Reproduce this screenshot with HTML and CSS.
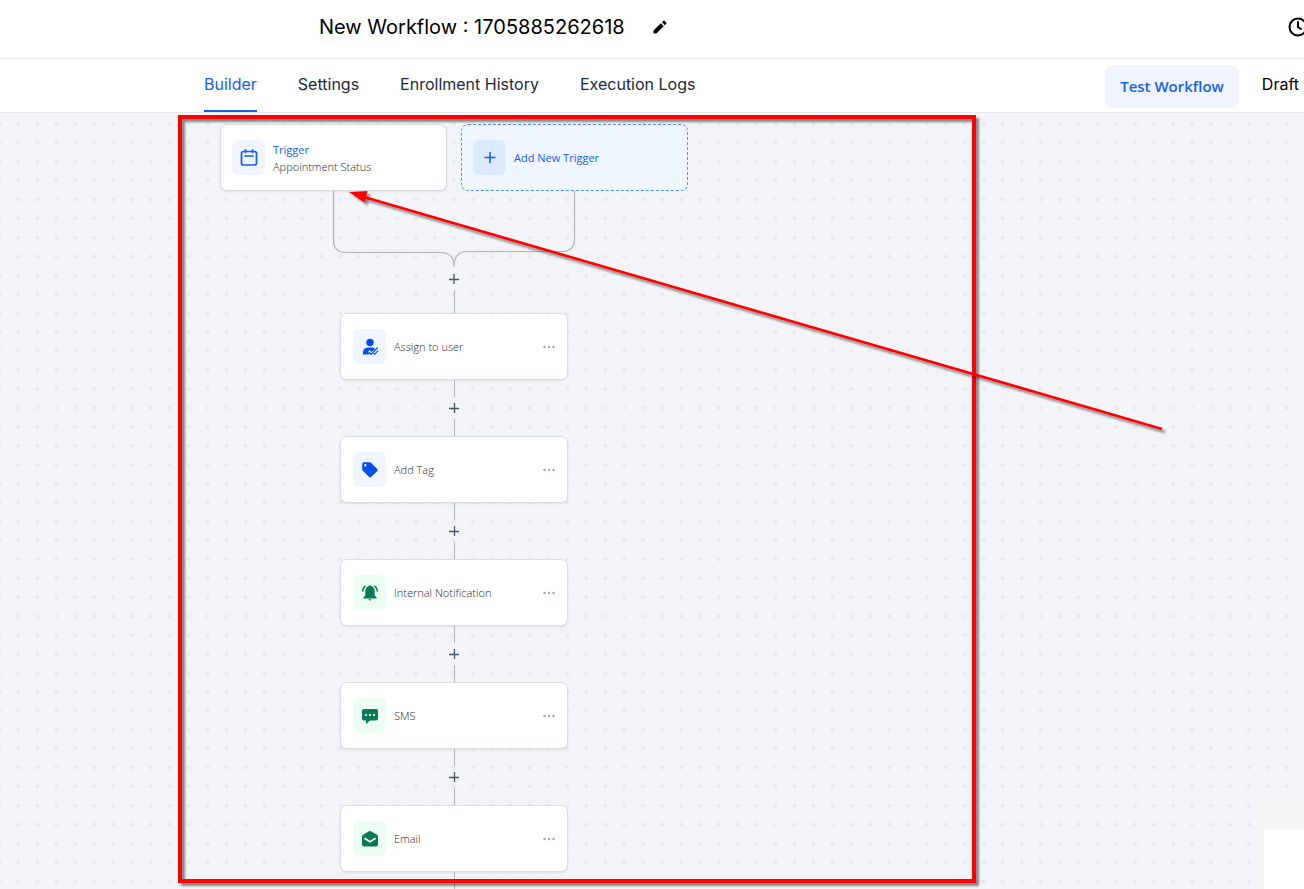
FILE: index.html
```html
<!DOCTYPE html>
<html lang="en">
<head>
<meta charset="utf-8">
<meta name="viewport" content="width=device-width, initial-scale=1">
<title>New Workflow : 1705885262618</title>
<link rel="stylesheet" href="styles.css">
</head>
<body>
<div class="app">
  <header class="titlebar">
    <h1 class="title">New Workflow : 1705885262618</h1>
    <button class="icon-button edit" type="button" aria-label="Rename workflow">
      <svg width="16" height="16" viewBox="0 0 16 16"><path d="M1.5 11.6V14.5H4.4L11.7 7.2 8.8 4.3ZM9.8 3.3 12.7 6.2 14.2 4.7Q14.8 4.1 14.2 3.5L12.5 1.8Q11.9 1.2 11.3 1.8Z"/></svg>
    </button>
    <button class="icon-button clock" type="button" aria-label="Version history">
      <svg width="24" height="24" viewBox="0 0 24 24" fill="none" stroke="#000" stroke-width="2" stroke-linecap="round" stroke-linejoin="round"><circle cx="12" cy="12" r="8.5"/><path d="M12 7V12L15 14"/></svg>
    </button>
  </header>

  <div class="toolbar">
    <nav class="tabs">
      <a class="tab active" href="#builder" aria-current="page">Builder</a>
      <a class="tab" href="#settings">Settings</a>
      <a class="tab" href="#history">Enrollment History</a>
      <a class="tab" href="#logs">Execution Logs</a>
    </nav>
    <div class="actions">
      <button class="test" type="button">Test Workflow</button>
      <span class="status">Draft</span>
    </div>
  </div>

  <main class="canvas">
    <svg class="dots" width="100%" height="100%" aria-hidden="true">
      <defs>
        <pattern id="grid" x="8.9" y="1.5" width="18.93" height="18.93" patternUnits="userSpaceOnUse"><circle cx="9.5" cy="9.5" r="2" fill="#e7e8ea"/></pattern>
      </defs>
      <rect width="100%" height="100%" fill="url(#grid)"/>
    </svg>

    <div class="flow">
      <div class="triggers">
        <button class="card trigger" type="button">
          <span class="badge blue"><svg width="20" height="20" viewBox="0 0 20 20" fill="none" stroke="#155eef" stroke-width="1.7" stroke-linecap="round"><rect x="2.5" y="3.5" width="15" height="13.5" rx="2"/><path d="M6.5 1.8V4.5M13.5 1.8V4.5M6 8H14"/></svg></span>
          <span class="labels"><span class="kind">Trigger</span><span class="name">Appointment Status</span></span>
        </button>
        <button class="card add-trigger" type="button">
          <span class="badge sky"><svg width="20" height="20" viewBox="0 0 20 20" fill="none" stroke="#155eef" stroke-width="1.5"><path d="M4.5 9.5H15.5M10 4V15"/></svg></span>
          <span class="kind">Add New Trigger</span>
        </button>
      </div>

      <svg class="merge" width="468" height="76" viewBox="0 0 468 76" fill="none" stroke="#b1b4b9" stroke-width="1.2"><path d="M113.5 0V49Q113.5 61.5 126 61.5H221Q234 61.5 234 76M354.5 0V48Q354.5 60.5 342 60.5H247Q234 60.5 234 76"/></svg>
      <div class="join">
        <button class="plus" type="button" aria-label="Add step"><svg width="12" height="12" viewBox="0 0 12 12" stroke="#475467" stroke-width="1.3"><path d="M1 6.5H11M6 1V11"/></svg></button>
        <span class="line"></span>
      </div>

      <div class="card step">
        <span class="badge blue"><svg width="20" height="20" viewBox="0 0 20 20" fill="#004eeb"><circle cx="10" cy="5.5" r="3.7"/><path d="M3 17.5V15Q3.5 10.5 8.5 10.5H11.5Q13.8 10.5 15 11.6L11.8 15 9.8 13 7.7 15.1 10 17.5Z"/><path d="M8.5 14.8 11.3 17.3 17.5 10.5M13.6 16.5 14.8 17.3 18 13.7" fill="none" stroke="#004eeb" stroke-width="1.2"/></svg></span>
        <span class="name">Assign to user</span>
        <button class="more" type="button" aria-label="Assign to user options"><svg width="12" height="4" viewBox="0 0 12 4"><circle cx="1.5" cy="2" r="1.2"/><circle cx="6" cy="2" r="1.2"/><circle cx="10.5" cy="2" r="1.2"/></svg></button>
      </div>

      <div class="connector">
        <span class="line"></span>
        <button class="plus" type="button" aria-label="Add step"><svg width="12" height="12" viewBox="0 0 12 12" stroke="#475467" stroke-width="1.3"><path d="M1 6.5H11M6.5 1V11"/></svg></button>
        <span class="line"></span>
      </div>

      <div class="card step">
        <span class="badge blue"><svg width="20" height="20" viewBox="0 0 20 20"><path fill="#004eeb" fill-rule="evenodd" d="M2.2 4Q2.2 2.2 4 2.2H9.5Q10.3 2.2 10.9 2.8L17.2 9.1Q18.2 10.1 17.2 11.1L11.2 17.1Q10.2 18 9.2 17.1L2.8 10.8Q2.2 10.2 2.2 9.3ZM5.3 4.1A1.2 1.2 0 1 0 5.3 6.5 1.2 1.2 0 1 0 5.3 4.1Z"/></svg></span>
        <span class="name">Add Tag</span>
        <button class="more" type="button" aria-label="Add Tag options"><svg width="12" height="4" viewBox="0 0 12 4"><circle cx="1.5" cy="2" r="1.2"/><circle cx="6" cy="2" r="1.2"/><circle cx="10.5" cy="2" r="1.2"/></svg></button>
      </div>

      <div class="connector">
        <span class="line"></span>
        <button class="plus" type="button" aria-label="Add step"><svg width="12" height="12" viewBox="0 0 12 12" stroke="#475467" stroke-width="1.3"><path d="M1 6.5H11M6.5 1V11"/></svg></button>
        <span class="line"></span>
      </div>

      <div class="card step">
        <span class="badge green"><svg width="20" height="20" viewBox="0 0 20 20" fill="#087a55"><path d="M9 3Q10 1.7 11 3 14.7 4.2 14.7 8.3V12.5L16.5 14.2V15.5H3.5V14.2L5.3 12.5V8.3Q5.3 4.2 9 3ZM8.3 16.3H11.7Q10 18.8 8.3 16.3Z"/><path d="M2.7 8.5Q2.8 4.8 5.5 2.8M17.3 8.5Q17.2 4.8 14.5 2.8" fill="none" stroke="#087a55" stroke-width="1.5"/></svg></span>
        <span class="name">Internal Notification</span>
        <button class="more" type="button" aria-label="Internal Notification options"><svg width="12" height="4" viewBox="0 0 12 4"><circle cx="1.5" cy="2" r="1.2"/><circle cx="6" cy="2" r="1.2"/><circle cx="10.5" cy="2" r="1.2"/></svg></button>
      </div>

      <div class="connector">
        <span class="line"></span>
        <button class="plus" type="button" aria-label="Add step"><svg width="12" height="12" viewBox="0 0 12 12" stroke="#475467" stroke-width="1.3"><path d="M1 6.5H11M6.5 1V11"/></svg></button>
        <span class="line"></span>
      </div>

      <div class="card step">
        <span class="badge green"><svg width="20" height="20" viewBox="0 0 20 20"><path fill="#087a55" d="M4 3H16Q18 3 18 5V12.5Q18 14.5 16 14.5H10L6 18V14.5H4Q2 14.5 2 12.5V5Q2 3 4 3Z"/><g fill="#fff"><circle cx="6" cy="9" r="1.1"/><circle cx="10" cy="9" r="1.1"/><circle cx="14" cy="9" r="1.1"/></g></svg></span>
        <span class="name">SMS</span>
        <button class="more" type="button" aria-label="SMS options"><svg width="12" height="4" viewBox="0 0 12 4"><circle cx="1.5" cy="2" r="1.2"/><circle cx="6" cy="2" r="1.2"/><circle cx="10.5" cy="2" r="1.2"/></svg></button>
      </div>

      <div class="connector">
        <span class="line"></span>
        <button class="plus" type="button" aria-label="Add step"><svg width="12" height="12" viewBox="0 0 12 12" stroke="#475467" stroke-width="1.3"><path d="M1 6.5H11M6.5 1V11"/></svg></button>
        <span class="line"></span>
      </div>

      <div class="card step">
        <span class="badge green"><svg width="20" height="20" viewBox="0 0 20 20"><path fill="#087a55" d="M9 2.3Q10 1.8 11 2.3L17 5.7Q18 6.3 18 7.5V15.5Q18 17.5 16 17.5H4Q2 17.5 2 15.5V7.5Q2 6.3 3 5.7Z"/><path d="M4.5 9.3 10 12.7 15.5 9.3" fill="none" stroke="#fff" stroke-width="1.7"/></svg></span>
        <span class="name">Email</span>
        <button class="more" type="button" aria-label="Email options"><svg width="12" height="4" viewBox="0 0 12 4"><circle cx="1.5" cy="2" r="1.2"/><circle cx="6" cy="2" r="1.2"/><circle cx="10.5" cy="2" r="1.2"/></svg></button>
      </div>

      <div class="connector"><span class="line"></span></div>
    </div>

    <aside class="corner"><div class="corner-panel"></div></aside>
  </main>

  <svg class="annotation" width="1304" height="889" viewBox="0 0 1304 889" aria-hidden="true">
    <defs>
      <filter id="shade" filterUnits="userSpaceOnUse" x="0" y="0" width="1304" height="889"><feDropShadow dx="3" dy="3" stdDeviation="1.2" flood-color="#000" flood-opacity=".45"/></filter>
    </defs>
    <rect x="180" y="117" width="794" height="764" fill="none" stroke="#f00" stroke-width="4" filter="url(#shade)"/>
    <g filter="url(#shade)"><path d="M364 197 1162 429" stroke="#f00" stroke-width="2.6"/><path d="M349 192 367.5 191 364.5 202.5Z" fill="#f00"/></g>
  </svg>
</div>
</body>
</html>
```
FILE: styles.css
```css
* { box-sizing: border-box; }

body {
  margin: 0;
  font-family: Inter, "Liberation Sans", sans-serif;
  color: #101828;
}

button {
  margin: 0;
  padding: 0;
  border: 0;
  background: none;
  font: inherit;
  color: inherit;
  text-align: left;
  cursor: pointer;
}

svg { display: block; }

.app {
  position: relative;
  display: flex;
  flex-direction: column;
  height: 100vh;
  overflow: hidden;
  background: #fff;
}

.titlebar {
  flex: none;
  display: flex;
  align-items: center;
  height: 59px;
  padding: 0 0 4px 319px;
  border-bottom: 1px solid #eaebed;
}

.title {
  margin: 0;
  font-size: 20px;
  line-height: 28px;
  font-weight: 400;
  color: #000;
  white-space: nowrap;
}

.edit { margin-left: 27px; }

.clock {
  margin-left: auto;
  margin-right: -6px;
}

.toolbar {
  flex: none;
  display: flex;
  justify-content: space-between;
  height: 54px;
  padding: 0 5px 0 204px;
  border-bottom: 1px solid #e6e7ea;
}

.tabs {
  display: flex;
  gap: 41px;
}

.tab {
  padding-top: 13px;
  font-size: 16px;
  line-height: 24px;
  color: #1d2939;
  text-decoration: none;
  white-space: nowrap;
  border-bottom: 2px solid transparent;
}

.tab.active {
  color: #155eef;
  border-bottom-color: #155eef;
}

.actions {
  display: flex;
  align-items: flex-start;
  gap: 23px;
  padding-top: 6px;
}

.test {
  height: 42px;
  padding: 0 15px;
  border-radius: 8px;
  background: #eff4ff;
  box-shadow: 0 1px 2px #1018280d;
  font-family: "Open Sans", "Noto Sans", sans-serif;
  font-size: 15px;
  font-weight: 600;
  color: #155eef;
  white-space: nowrap;
}

.status {
  padding-top: 7px;
  font-size: 16px;
  line-height: 24px;
  color: #000;
}

.canvas {
  position: relative;
  flex: 1;
  min-height: 0;
  overflow: hidden;
  background: #f2f4f7;
}

.dots {
  position: absolute;
  inset: 0;
}

.flow {
  position: relative;
  display: flex;
  flex-direction: column;
  align-items: center;
  width: 468px;
  margin-left: 220px;
  padding-top: 11px;
  font-family: "Open Sans", "Noto Sans", sans-serif;
  font-size: 11px;
  line-height: 17px;
}

.triggers {
  display: flex;
  gap: 14px;
  width: 100%;
}

.triggers .card {
  flex: 1;
  padding: 0 11px;
}

.card {
  display: flex;
  align-items: center;
  gap: 8px;
  height: 67px;
  padding: 0 12px;
  border: 1px solid #d9dce1;
  border-radius: 7px;
  background: #fff;
  box-shadow: 0 1px 2px #10182814;
}

.add-trigger {
  border: 1px dashed #528bff;
  background: #eff6ff;
  box-shadow: none;
}

.step {
  flex: none;
  width: 228px;
}

.badge {
  flex: none;
  display: grid;
  place-items: center;
  width: 33px;
  height: 35px;
  border-radius: 6px;
}

.blue { background: #eff4ff; }
.sky { background: #dbeafe; }
.green { background: #ecfdf3; }

.labels {
  display: flex;
  flex-direction: column;
}

.kind {
  font-weight: 500;
  color: #155eef;
}

.name {
  font-weight: 300;
  color: #1d2939;
}

.more {
  margin-left: auto;
  fill: #98a2b3;
}

.merge { flex: none; }

.join,
.connector {
  flex: none;
  display: flex;
  flex-direction: column;
  align-items: center;
  justify-content: space-between;
}

.join { height: 46px; padding-top: 6px; }
.connector { height: 56px; }

.line {
  width: 1px;
  height: 17px;
  background: #b1b4b9;
}

.join .line { height: 23px; }

.corner {
  position: absolute;
  right: 0;
  bottom: 0;
  padding: 29px 0 0 6px;
  background: #f5f5f5;
}

.corner-panel {
  width: 40px;
  height: 60px;
  background: #fff;
}

.annotation {
  position: absolute;
  top: 0;
  left: 0;
  pointer-events: none;
}
```
